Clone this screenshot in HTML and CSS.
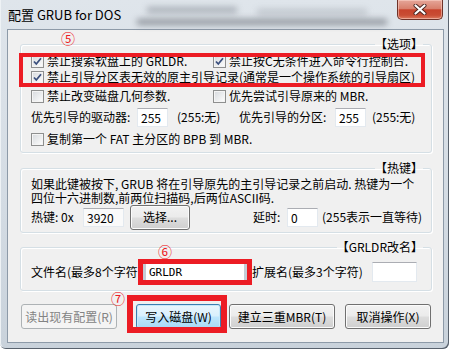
FILE: index.html
```html
<!DOCTYPE html>
<html lang="zh-CN">
<head>
    <meta charset="UTF-8">
    <meta name="viewport" content="width=device-width, initial-scale=1.0">
    <title>配置 GRUB for DOS</title>
    <link rel="stylesheet" href="styles.css">
</head>
<body>
    <div class="window">
        <div class="titlebar">
            <span class="title">配置 GRUB for DOS</span>
            <span class="blur blur-a"></span>
            <span class="blur blur-b"></span>
            <span class="blur blur-c"></span>
            <span class="close-button">
                <svg width="14" height="11" viewBox="0 0 14 11">
                    <path d="M2.5 1.5 L11.5 9.5 M11.5 1.5 L2.5 9.5" stroke="#4a2520" stroke-width="4" stroke-linecap="round"/>
                    <path d="M2.5 1.5 L11.5 9.5 M11.5 1.5 L2.5 9.5" stroke="#ffffff" stroke-width="2.2" stroke-linecap="round"/>
                </svg>
            </span>
        </div>

        <div class="client">
            <fieldset class="group group-options">
                <legend>【选项】</legend>
                <div class="row">
                    <label class="check-item col-left">
                        <span class="check"><svg width="11" height="11" viewBox="0 0 11 11"><path d="M2 5.5 L4.3 8 L9 2.3" fill="none" stroke="#3b4f7d" stroke-width="1.8"/></svg></span>禁止搜索软盘上的 GRLDR.
                    </label>
                    <label class="check-item">
                        <span class="check"><svg width="11" height="11" viewBox="0 0 11 11"><path d="M2 5.5 L4.3 8 L9 2.3" fill="none" stroke="#3b4f7d" stroke-width="1.8"/></svg></span>禁止按C无条件进入命令行控制台.
                    </label>
                </div>
                <div class="row">
                    <label class="check-item">
                        <span class="check"><svg width="11" height="11" viewBox="0 0 11 11"><path d="M2 5.5 L4.3 8 L9 2.3" fill="none" stroke="#3b4f7d" stroke-width="1.8"/></svg></span>禁止引导分区表无效的原主引导记录(通常是一个操作系统的引导扇区)
                    </label>
                </div>
                <div class="row row-gap">
                    <label class="check-item col-left"><span class="check"></span>禁止改变磁盘几何参数.</label>
                    <label class="check-item"><span class="check"></span>优先尝试引导原来的 MBR.</label>
                </div>
                <div class="row row-field">
                    <span class="field-label w-drive">优先引导的驱动器:</span>
                    <input type="text" class="textbox w-num" value="255">
                    <span class="hint w-hint">(255:无)</span>
                    <span class="field-label w-part">优先引导的分区:</span>
                    <input type="text" class="textbox w-num" value="255">
                    <span class="hint hint-right">(255:无)</span>
                </div>
                <div class="row row-gap">
                    <label class="check-item"><span class="check"></span>复制第一个 FAT 主分区的 BPB 到 MBR.</label>
                </div>
            </fieldset>

            <fieldset class="group group-hotkey">
                <legend>【热键】</legend>
                <p class="note">如果此键被按下, GRUB 将在引导原先的主引导记录之前启动. 热键为一个</p>
                <p class="note">四位十六进制数,前两位扫描码,后两位ASCII码.</p>
                <div class="row row-hotkey">
                    <span class="field-label w-hotkey">热键: 0x</span>
                    <input type="text" class="textbox w-code" value="3920">
                    <button class="button button-pick">选择...</button>
                    <span class="field-label w-delay">延时:</span>
                    <input type="text" class="textbox w-num" value="0">
                    <span class="hint hint-delay">(255表示一直等待)</span>
                </div>
            </fieldset>

            <fieldset class="group group-rename">
                <legend>【GRLDR改名】</legend>
                <div class="row row-hotkey">
                    <span class="field-label w-file">文件名(最多8个字符</span>
                    <input type="text" class="textbox w-file-input" value="GRLDR">
                    <span class="field-label w-ext">扩展名(最多3个字符)</span>
                    <input type="text" class="textbox w-ext-input" value="">
                </div>
            </fieldset>

            <div class="button-row">
                <button class="button btn-read" disabled>读出现有配置(R)</button>
                <button class="button button-default btn-write">写入磁盘(W)</button>
                <button class="button btn-mbr">建立三重MBR(T)</button>
                <button class="button btn-cancel">取消操作(X)</button>
            </div>
        </div>

        <!-- annotations drawn on top of the screenshot -->
        <span class="anno-box box-options"></span>
        <span class="anno-box box-rename"></span>
        <span class="anno-box box-write"></span>
        <span class="anno-num num-5">⑤</span>
        <span class="anno-num num-6">⑥</span>
        <span class="anno-num num-7">⑦</span>
    </div>
</body>
</html>
```

FILE: styles.css
```css
* {
    margin: 0;
    padding: 0;
    box-sizing: border-box;
}

body {
    background-color: #ffffff;
    font-family: "Noto Sans CJK SC", sans-serif;
    font-size: 12px;
    color: #000000;
}

input,
button {
    font: inherit;
    color: inherit;
}

.window {
    position: relative;
    width: 449px;
    height: 349px;
    padding: 0 5px 6px 7px;
    background: linear-gradient(to bottom, #dfe5eb 0%, #d3dbe3 60%, #c9d2db 100%);
    border-radius: 0 0 6px 6px;
    box-shadow: inset -1px -1px 0 #59626d, inset 1px 0 0 #eef2f5;
    overflow: hidden;
}

.titlebar {
    position: relative;
    display: flex;
    align-items: flex-start;
    height: 29px;
}

.title {
    padding: 6px 0 0 1px;
    font-size: 13px;
    line-height: 18px;
    color: #000000;
    z-index: 1;
}

.blur {
    position: absolute;
    height: 6px;
    background-color: rgba(70, 75, 85, 0.35);
    filter: blur(3px);
}

.blur-a { left: 140px; top: 7px; width: 90px; }
.blur-b { left: 130px; top: 19px; width: 250px; background-color: rgba(50, 55, 65, 0.45); }
.blur-c { left: 250px; top: 9px; width: 110px; background-color: rgba(70, 75, 85, 0.2); }

.close-button {
    display: flex;
    align-items: center;
    justify-content: center;
    margin-left: auto;
    margin-right: 1px;
    width: 46px;
    height: 20px;
    border: 1px solid #6e3228;
    border-top: none;
    border-radius: 0 0 5px 5px;
    background: linear-gradient(to bottom, #e5a699 0%, #d8806d 45%, #c7432c 52%, #c94d34 80%, #dc7a5f 100%);
    box-shadow: inset 0 0 0 1px rgba(255, 220, 210, 0.5);
    z-index: 1;
}

.client {
    height: 314px;
    padding: 7px 11px 0 12px;
    background-color: #f0f0f0;
    border: 1px solid #8d9aa8;
}

/* group boxes */

.group {
    border: 1px solid #d5dfe5;
    border-radius: 3px;
    padding: 2px 8px 5px 10px;
    box-shadow: 1px 1px 0 #ffffff, inset 1px 1px 0 #ffffff;
}

.group legend {
    margin-left: auto;
    padding: 0;
    line-height: 14px;
    height: 14px;
}

.group-hotkey {
    margin-top: 8px;
    padding-top: 2px;
}

.group-rename {
    margin-top: 7px;
    padding-top: 8px;
    padding-bottom: 8px;
}

.row {
    display: flex;
    align-items: center;
    height: 16px;
    line-height: 16px;
    white-space: nowrap;
}

.row-gap {
    margin-top: 3px;
}

.row-field {
    height: 22px;
    margin-top: 2px;
}

.row-hotkey {
    height: 20px;
    margin-top: 2px;
}

.group-rename .row-hotkey {
    margin-top: 0;
}

.check-item {
    display: flex;
    align-items: center;
}

.col-left {
    width: 182px;
}

.check {
    display: flex;
    align-items: center;
    justify-content: center;
    flex: none;
    width: 13px;
    height: 13px;
    margin-right: 3px;
    border: 1px solid #8e8f8f;
    background: linear-gradient(135deg, #d6d9dd 0%, #f2f3f4 70%, #ffffff 100%);
    box-shadow: inset 0 0 0 1px #f4f4f4;
}

.field-label {
    flex: none;
}

.textbox {
    flex: none;
    height: 19px;
    padding: 0 3px;
    border: 1px solid #e3e9ef;
    border-top-color: #abadb3;
    background-color: #ffffff;
    font-size: 12px;
    line-height: 17px;
    outline: none;
}

.w-drive { width: 106px; }
.w-num { width: 31px; }
.w-hint { width: 62px; margin-left: 9px; }
.w-part { width: 96px; }
.hint-right { margin-left: 6px; }

.note {
    height: 14px;
    line-height: 14px;
    white-space: nowrap;
}

.w-hotkey { width: 52px; }
.w-code { width: 41px; background-color: #fafafa; }
.button-pick {
    width: 60px;
    height: 21px;
    margin-left: 6px;
}
.w-delay { width: 34px; margin-left: 63px; }
.hint-delay { margin-left: 4px; }

.w-file { width: 112px; }
.w-file-input {
    width: 104px;
    height: 20px;
    border-left: 3px solid #c4cdd6;
    border-right: 3px solid #c4cdd6;
    font-family: "DejaVu Sans Mono", monospace;
    font-size: 11px;
}
.w-ext { width: 120px; margin-left: 5px; }
.w-ext-input { width: 45px; height: 20px; }

/* buttons */

.button-row {
    display: flex;
    margin-top: 13px;
    margin-left: 1px;
}

.button {
    height: 25px;
    border: 1px solid #707070;
    border-radius: 3px;
    background: linear-gradient(to bottom, #f2f2f2 0%, #ebebeb 48%, #dddddd 52%, #cfcfcf 100%);
    box-shadow: inset 0 0 0 1px #fbfbfb;
    font-size: 12px;
    line-height: 20px;
    white-space: nowrap;
}

.button-default {
    border-color: #3c7fb1;
    background: linear-gradient(to bottom, #eaf6fd 0%, #d9f0fc 48%, #bee6fd 52%, #a7d9f5 100%);
    box-shadow: inset 0 0 0 1px #c6e9fb;
}

.button:disabled {
    border-color: #adb2b5;
    background: #f4f4f4;
    box-shadow: none;
    color: #838383;
}

.btn-read { width: 96px; }
.btn-write { width: 85px; margin-left: 19px; }
.btn-mbr { width: 106px; margin-left: 8px; }
.btn-cancel { width: 86px; margin-left: 10px; }

/* annotations */

.anno-box {
    position: absolute;
    border: 4px solid #ec1c24;
    pointer-events: none;
}

.box-options {
    left: 19px;
    top: 53px;
    width: 406px;
    height: 34px;
}

.box-rename {
    left: 138px;
    top: 259px;
    width: 114px;
    height: 26px;
    border-width: 5px;
}

.box-write {
    left: 127px;
    top: 295px;
    width: 100px;
    height: 38px;
    border-width: 6px;
}

.anno-num {
    position: absolute;
    font-size: 14px;
    line-height: 14px;
    color: #ec1c24;
}

.num-5 { left: 61px; top: 31px; }
.num-6 { left: 158px; top: 244px; }
.num-7 { left: 111px; top: 291px; }
```
